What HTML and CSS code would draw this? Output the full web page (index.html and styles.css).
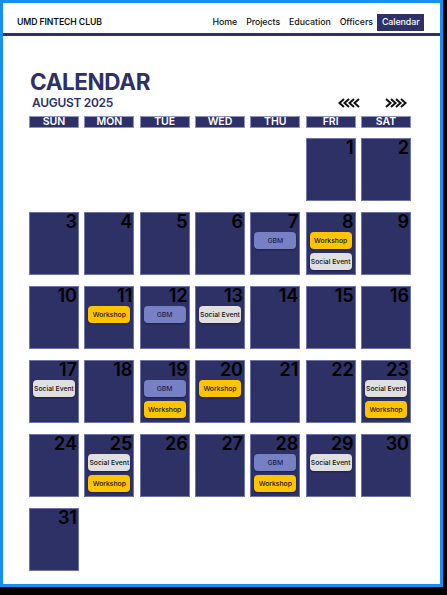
FILE: index.html
```html
<!DOCTYPE html>
<html lang="en">
<head>
<meta charset="utf-8">
<title>UMD Fintech Club - Calendar</title>
<link rel="stylesheet" href="styles.css">
</head>
<body>
<div class="frame">
  <header class="topbar">
    <div class="brand">UMD FINTECH CLUB</div>
    <nav class="nav">
      <a class="nav-link">Home</a>
      <a class="nav-link">Projects</a>
      <a class="nav-link">Education</a>
      <a class="nav-link">Officers</a>
      <a class="nav-link active">Calendar</a>
    </nav>
  </header>
  <main class="content">
    <h1 class="title">CALENDAR</h1>
    <div class="subrow">
      <div class="month">AUGUST 2025</div>
      <div class="arrows">
        <svg class="chev" width="24" height="10" viewBox="0 0 24 10"><g fill="none" stroke="#111" stroke-width="2"><polyline points="6,1 1.5,5 6,9"/><polyline points="11,1 6.5,5 11,9"/><polyline points="16,1 11.5,5 16,9"/><polyline points="21,1 16.5,5 21,9"/></g></svg>
        <svg class="chev" width="24" height="10" viewBox="0 0 24 10"><g fill="none" stroke="#111" stroke-width="2"><polyline points="3,1 7.5,5 3,9"/><polyline points="8,1 12.5,5 8,9"/><polyline points="13,1 17.5,5 13,9"/><polyline points="18,1 22.5,5 18,9"/></g></svg>
      </div>
    </div>
    <div class="weekdays">
      <div class="wd">SUN</div><div class="wd">MON</div><div class="wd">TUE</div><div class="wd">WED</div><div class="wd">THU</div><div class="wd">FRI</div><div class="wd">SAT</div>
    </div>
    <div class="grid">
      <div class="blank"></div><div class="blank"></div><div class="blank"></div><div class="blank"></div><div class="blank"></div>
      <div class="day"><span class="num">1</span></div>
      <div class="day"><span class="num">2</span></div>

      <div class="day"><span class="num">3</span></div>
      <div class="day"><span class="num">4</span></div>
      <div class="day"><span class="num">5</span></div>
      <div class="day"><span class="num">6</span></div>
      <div class="day"><span class="num">7</span><span class="tag gbm">GBM</span></div>
      <div class="day"><span class="num">8</span><span class="tag work">Workshop</span><span class="tag social">Social Event</span></div>
      <div class="day"><span class="num">9</span></div>

      <div class="day"><span class="num">10</span></div>
      <div class="day"><span class="num">11</span><span class="tag work">Workshop</span></div>
      <div class="day"><span class="num">12</span><span class="tag gbm">GBM</span></div>
      <div class="day"><span class="num">13</span><span class="tag social">Social Event</span></div>
      <div class="day"><span class="num">14</span></div>
      <div class="day"><span class="num">15</span></div>
      <div class="day"><span class="num">16</span></div>

      <div class="day"><span class="num">17</span><span class="tag social">Social Event</span></div>
      <div class="day"><span class="num">18</span></div>
      <div class="day"><span class="num">19</span><span class="tag gbm">GBM</span><span class="tag work">Workshop</span></div>
      <div class="day"><span class="num">20</span><span class="tag work">Workshop</span></div>
      <div class="day"><span class="num">21</span></div>
      <div class="day"><span class="num">22</span></div>
      <div class="day"><span class="num">23</span><span class="tag social">Social Event</span><span class="tag work">Workshop</span></div>

      <div class="day"><span class="num">24</span></div>
      <div class="day"><span class="num">25</span><span class="tag social">Social Event</span><span class="tag work">Workshop</span></div>
      <div class="day"><span class="num">26</span></div>
      <div class="day"><span class="num">27</span></div>
      <div class="day"><span class="num">28</span><span class="tag gbm">GBM</span><span class="tag work">Workshop</span></div>
      <div class="day"><span class="num">29</span><span class="tag social">Social Event</span></div>
      <div class="day"><span class="num">30</span></div>

      <div class="day"><span class="num">31</span></div>
    </div>
  </main>
</div>
</body>
</html>
```
FILE: styles.css
```css
* { box-sizing: border-box; }
html, body { margin: 0; padding: 0; }
body {
  background: #000;
  width: 447px;
  height: 595px;
  overflow: hidden;
  font-family: Inter, "Noto Sans", sans-serif;
}
.frame {
  width: 443px;
  height: 587px;
  border: 3px solid #178ff0;
  background: #fff;
}
.topbar {
  height: 33px;
  border-bottom: 3px solid #2d3166;
  display: flex;
  justify-content: space-between;
  align-items: flex-start;
  padding: 11px 16px 0 14px;
}
.brand {
  font-size: 8.7px;
  font-weight: 600;
  color: #111;
  line-height: 16px;
  letter-spacing: -0.1px;
}
.nav { display: flex; }
.nav-link {
  font-size: 8.8px;
  font-weight: 500;
  color: #111;
  line-height: 16px;
  padding: 0 4.5px 1px;
  letter-spacing: -0.05px;
}
.nav-link.active {
  background: #2d3166;
  color: #fff;
}
.content {
  padding: 34px 0 0 26px;
  width: 408px;
}
.title {
  margin: 0;
  font-size: 22.5px;
  line-height: 23px;
  font-weight: 700;
  color: #2d3166;
  letter-spacing: -0.4px;
  padding-left: 1px;
}
.subrow {
  margin-top: 3px;
  height: 14px;
  display: flex;
  justify-content: space-between;
  align-items: center;
}
.month {
  font-size: 12px;
  line-height: 14px;
  font-weight: 600;
  color: #2d3166;
  padding-left: 3px;
  letter-spacing: -0.3px;
}
.arrows {
  display: flex;
  gap: 21px;
  padding-right: 4px;
}
.chev { display: block; }
.weekdays {
  margin-top: 6px;
  display: grid;
  grid-template-columns: repeat(7, 50px);
  justify-content: space-between;
  width: 382px;
}
.wd {
  height: 12px;
  background: #2d3166;
  border: 1px solid #8e92bd;
  color: #fff;
  font-size: 10.5px;
  font-weight: 600;
  line-height: 10px;
  text-align: center;
}
.grid {
  margin-top: 10px;
  display: grid;
  grid-template-columns: repeat(7, 50px);
  grid-auto-rows: 63px;
  row-gap: 11px;
  justify-content: space-between;
  width: 382px;
}
.day {
  background: #2d3166;
  border: 1px solid #6e73a8;
  display: flex;
  flex-direction: column;
  align-items: center;
}
.num {
  align-self: flex-end;
  font-size: 18px;
  line-height: 18px;
  font-weight: 600;
  color: #000;
  padding-right: 1px;
  margin-bottom: 1px;
}
.tag {
  width: 42px;
  height: 17px;
  border-radius: 4px;
  font-size: 6.8px;
  font-weight: 500;
  color: #111;
  display: flex;
  align-items: center;
  justify-content: center;
  box-shadow: 0 1px 2px rgba(0, 0, 0, 0.35);
  margin-bottom: 4px;
  white-space: nowrap;
}
.gbm { background: #7880c4; color: #1d2050; }
.work { background: #ffc400; }
.social { background: #e0e0e0; }
```
